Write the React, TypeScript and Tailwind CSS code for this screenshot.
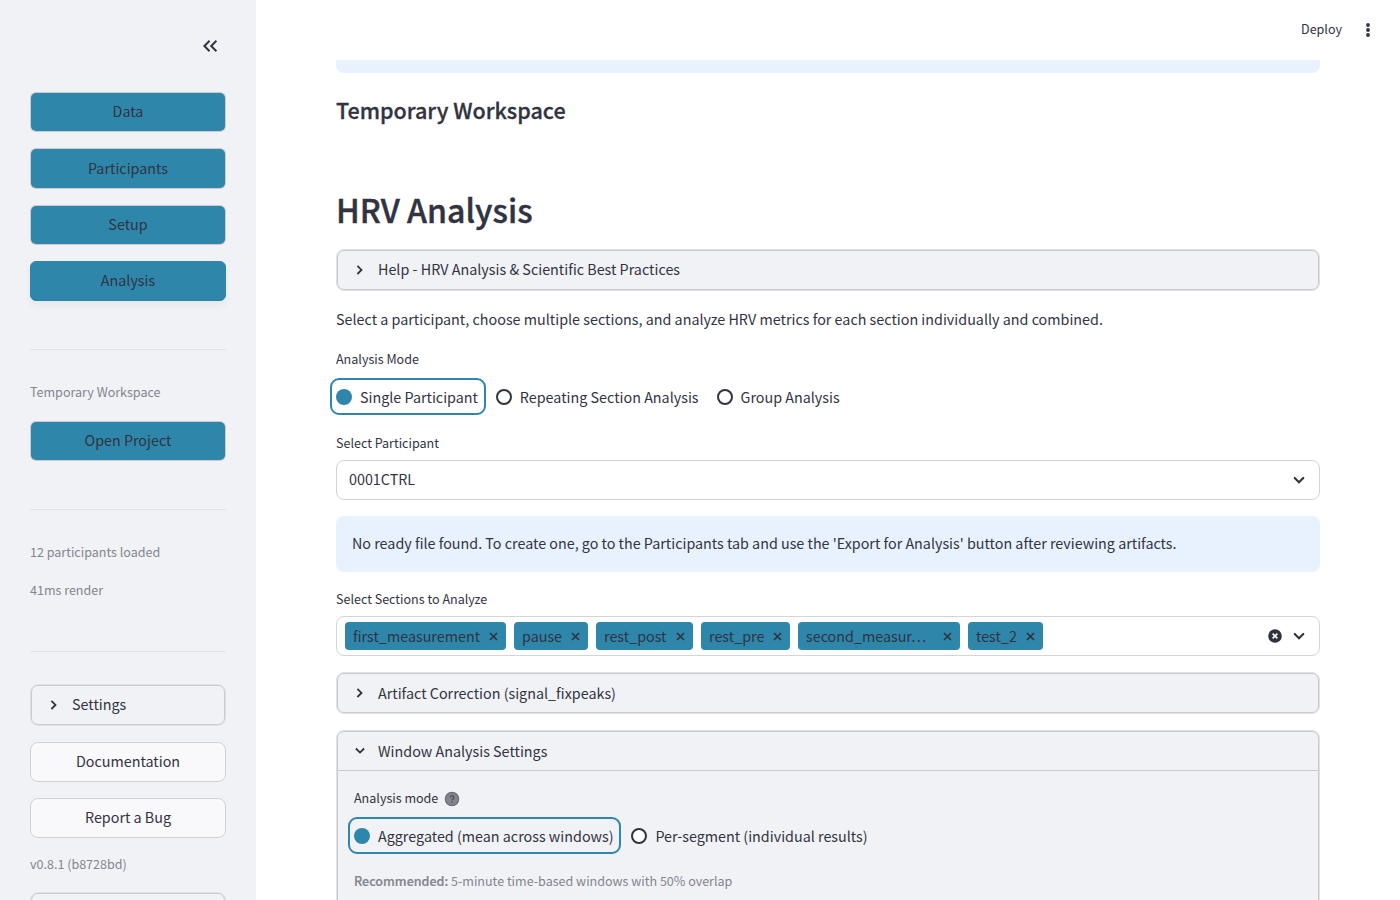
import type { ReactNode } from "react";
import clsx from "clsx";

const NAV_ITEMS = ["Data", "Participants", "Setup", "Analysis"];

const SECTIONS = [
  { label: "first_measurement", width: "w-[161px]" },
  { label: "pause", width: "w-[74px]" },
  { label: "rest_post", width: "w-[97px]" },
  { label: "rest_pre", width: "w-[89px]" },
  { label: "second_measur…", width: "w-[162px]" },
  { label: "test_2", width: "w-[75px]" },
];

function ChevronRight() {
  return (
    <svg width="20" height="20" viewBox="0 0 20 20" fill="none" className="shrink-0">
      <path d="m7.4 5.8 4.1 4.1-4.1 4.1" stroke="currentColor" strokeWidth="1.8" />
    </svg>
  );
}

function ChevronDown() {
  return (
    <svg width="20" height="20" viewBox="0 0 20 20" fill="none" className="shrink-0">
      <path d="M5.9 7.5 10 11.6l4.1-4.1" stroke="currentColor" strokeWidth="1.8" />
    </svg>
  );
}

function SelectArrow() {
  return (
    <svg width="16" height="16" viewBox="0 0 16 16" fill="none" className="shrink-0">
      <path d="m3.7 5.9 4.3 4.3 4.3-4.3" stroke="currentColor" strokeWidth="2.1" strokeLinecap="round" />
    </svg>
  );
}

function NavButton({ label, active }: { label: string; active?: boolean }) {
  return (
    <button
      className={clsx(
        "flex h-[40.4px] w-full shrink-0 items-center justify-center rounded-md border bg-[#2e86ab] text-[14.33px] leading-6",
        active
          ? "border-[#2e86ab] shadow-[0_4px_8px_rgba(0,0,0,0.05)]"
          : "border-[#31333f]/20 bg-clip-padding"
      )}
    >
      <span className="-mt-[1.6px]">{label}</span>
    </button>
  );
}

function LinkButton({ label }: { label: string }) {
  return (
    <button className="flex h-10 w-full shrink-0 items-center justify-center rounded-lg border border-[#d0d1d6] bg-[#f9f9fb] text-[14.33px] leading-6">
      <span className="-mt-px">{label}</span>
    </button>
  );
}

function Divider({ className }: { className?: string }) {
  return <hr className={clsx("h-px w-full shrink-0 border-0 bg-[#e0e2e6]", className)} />;
}

function Caption({ children, className }: { children: ReactNode; className?: string }) {
  return <p className={clsx("h-5 shrink-0 text-[12.54px] leading-[19px] text-[#83858e]", className)}>{children}</p>;
}

function Expander({ title, open, className, children }: { title: string; open?: boolean; className?: string; children?: ReactNode }) {
  return (
    <div className={clsx("shrink-0 rounded-lg border border-[#dfe0e3] bg-[#f0f2f6]", className)}>
      <div className="h-full rounded-[7px] border border-[#c9cbcf]">
        <div className={clsx("flex h-[38px] items-center gap-2 pl-3", open && "box-content border-b border-[#c9cbcf]")}>
          {open ? <ChevronDown /> : <ChevronRight />}
          <span className="-mt-px text-[14.33px] leading-6">{title}</span>
        </div>
        {children}
      </div>
    </div>
  );
}

function Radio({ label, checked }: { label: string; checked?: boolean }) {
  return (
    <label
      className={clsx(
        "flex h-[37px] items-center gap-2",
        checked && "-ml-1.5 mr-[10px] rounded-[9px] border-2 border-[#2e86ab] pl-1 pr-[5.85px]"
      )}
    >
      <span
        className={clsx("size-4 rounded-full", checked ? "bg-[#2e86ab]" : "border-2 border-[#31333f] bg-white")}
      />
      <span className="text-[14.33px] leading-6">{label}</span>
    </label>
  );
}

function FieldLabel({ children, className }: { children: ReactNode; className?: string }) {
  return <div className={clsx("flex h-5 shrink-0 items-center text-[12.54px] leading-5", className)}>{children}</div>;
}

function Tag({ label, width }: { label: string; width: string }) {
  return (
    <span className={clsx("flex h-7 items-center justify-between rounded bg-[#2e86ab] pl-2 pr-2", width)}>
      <span className="text-[14.33px] leading-6">{label}</span>
      <svg width="9" height="9" viewBox="0 0 9 9" fill="none">
        <path d="m1 1 7 7M8 1 1 8" stroke="currentColor" strokeWidth="1.7" />
      </svg>
    </span>
  );
}

function Sidebar() {
  return (
    <aside className="flex h-full w-64 shrink-0 flex-col overflow-hidden bg-[#f0f2f6] px-[30px]">
      <div className="flex h-[91.8px] shrink-0 items-center justify-end pr-1.5">
        <svg width="20" height="20" viewBox="0 0 20 20" fill="none">
          <path d="M9.6 4.8 4.4 10l5.2 5.2M16.4 4.8 11.2 10l5.2 5.2" stroke="currentColor" strokeWidth="2" />
        </svg>
      </div>
      <nav className="flex flex-col gap-4">
        {NAV_ITEMS.map((item) => (
          <NavButton key={item} label={item} active={item === "Analysis"} />
        ))}
      </nav>
      <Divider className="mt-[47.6px]" />
      <Caption className="mt-8">Temporary Workspace</Caption>
      <div className="mt-[19px] h-10 shrink-0">
        <NavButton label="Open Project" />
      </div>
      <Divider className="mt-12" />
      <Caption className="mt-8">12 participants loaded</Caption>
      <Caption className="mt-[18px]">41ms render</Caption>
      <Divider className="mt-[51px]" />
      <Expander title="Settings" className="mt-8 h-[42px]" />
      <div className="mt-4 flex flex-col gap-4">
        <LinkButton label="Documentation" />
        <LinkButton label="Report a Bug" />
      </div>
      <Caption className="mt-4">v0.8.1 (b8728bd)</Caption>
      <Expander title="" className="mt-[18px] h-[42px]" />
    </aside>
  );
}

export default function App() {
  return (
    <div className="flex h-[900px] w-[1400px] overflow-hidden bg-white font-['Noto_Sans_CJK_SC','Noto_Sans',sans-serif] text-[#31333f]">
      <Sidebar />
      <div className="flex h-full flex-1 flex-col overflow-hidden">
        <header className="flex h-[60px] shrink-0 items-center justify-end gap-[18px] pr-6">
          <span className="-mt-0.5 text-[12.54px] leading-5">Deploy</span>
          <svg width="16" height="16" viewBox="0 0 16 16" fill="currentColor">
            <circle cx="8" cy="3" r="1.9" />
            <circle cx="8" cy="8" r="1.9" />
            <circle cx="8" cy="13" r="1.9" />
          </svg>
        </header>
        <main className="flex min-h-0 flex-1 flex-col px-20">
          <div className="h-[13px] shrink-0 rounded-b-lg bg-[#e8f2ff]" />
          <h3 className="mt-[19px] h-9 shrink-0 text-[21.54px] leading-9 font-medium [-webkit-text-stroke:0.3px]">
            Temporary Workspace
          </h3>
          <h1 className="mt-[54px] h-[54px] shrink-0 text-[32.1px] leading-[54px] font-medium [-webkit-text-stroke:0.4px]">
            HRV Analysis
          </h1>
          <Expander title="Help - HRV Analysis & Scientific Best Practices" className="mt-[12.8px] h-[42px]" />
          <p className="mt-[16.4px] h-6 shrink-0 text-[14.33px] leading-6">
            Select a participant, choose multiple sections, and analyze HRV metrics for each section individually and combined.
          </p>
          <FieldLabel className="mt-[18px]">Analysis Mode</FieldLabel>
          <div className="mt-[9px] flex shrink-0 gap-[18px]">
            <div className="-mr-[18px]">
              <Radio label="Single Participant" checked />
            </div>
            <Radio label="Repeating Section Analysis" />
            <Radio label="Group Analysis" />
          </div>
          <FieldLabel className="mt-[17.8px]">Select Participant</FieldLabel>
          <div className="mt-[7px] flex h-10 shrink-0 items-center justify-between rounded-lg border border-[#d3d4d7] pl-3 pr-3">
            <span className="-mt-0.5 text-[14.33px] leading-6">0001CTRL</span>
            <SelectArrow />
          </div>
          <div className="mt-4 flex h-14 shrink-0 items-center rounded-lg bg-[#e8f2ff] px-4 text-[14.325px] leading-6">
            <span className="-mt-0.5">
              No ready file found. To create one, go to the Participants tab and use the 'Export for Analysis' button after reviewing artifacts.
            </span>
          </div>
          <FieldLabel className="mt-[17px]">Select Sections to Analyze</FieldLabel>
          <div className="mt-[7.2px] flex h-10 shrink-0 items-center rounded-lg border border-[#d3d4d7] pl-2 pr-3">
            <div className="flex flex-1 gap-2">
              {SECTIONS.map((section) => (
                <Tag key={section.label} label={section.label} width={section.width} />
              ))}
            </div>
            <svg width="14" height="14" viewBox="0 0 14 14" className="mr-[9px]">
              <circle cx="7" cy="7" r="6.8" fill="#31333f" />
              <path d="m4.6 4.6 4.8 4.8m0-4.8L4.6 9.4" stroke="#fff" strokeWidth="1.6" />
            </svg>
            <SelectArrow />
          </div>
          <Expander title="Artifact Correction (signal_fixpeaks)" className="mt-4 h-[42px]" />
          <Expander title="Window Analysis Settings" open className="mt-4 h-[400px]">
            <div className="flex flex-col px-4">
              <FieldLabel className="mt-[17px] gap-1.5">
                Analysis mode
                <svg width="16" height="16" viewBox="0 0 16 16" fill="none" className="mt-px">
                  <circle cx="8" cy="8" r="6.6" fill="#83858f" stroke="#6a6c77" strokeWidth="1.3" />
                  <path d="M6.2 6.5a1.8 1.8 0 1 1 2.8 1.5c-.7.4-1 .6-1 1.3M8 10.5v1.2" stroke="#4a4c58" strokeWidth="1.3" />
                </svg>
              </FieldLabel>
              <div className="mt-[9px] flex">
                <Radio label="Aggregated (mean across windows)" checked />
                <Radio label="Per-segment (individual results)" />
              </div>
              <Caption className="mt-[16.8px]">
                <span className="font-medium [-webkit-text-stroke:0.2px]">Recommended:</span> 5-minute time-based windows with 50% overlap
              </Caption>
            </div>
          </Expander>
        </main>
      </div>
    </div>
  );
}
